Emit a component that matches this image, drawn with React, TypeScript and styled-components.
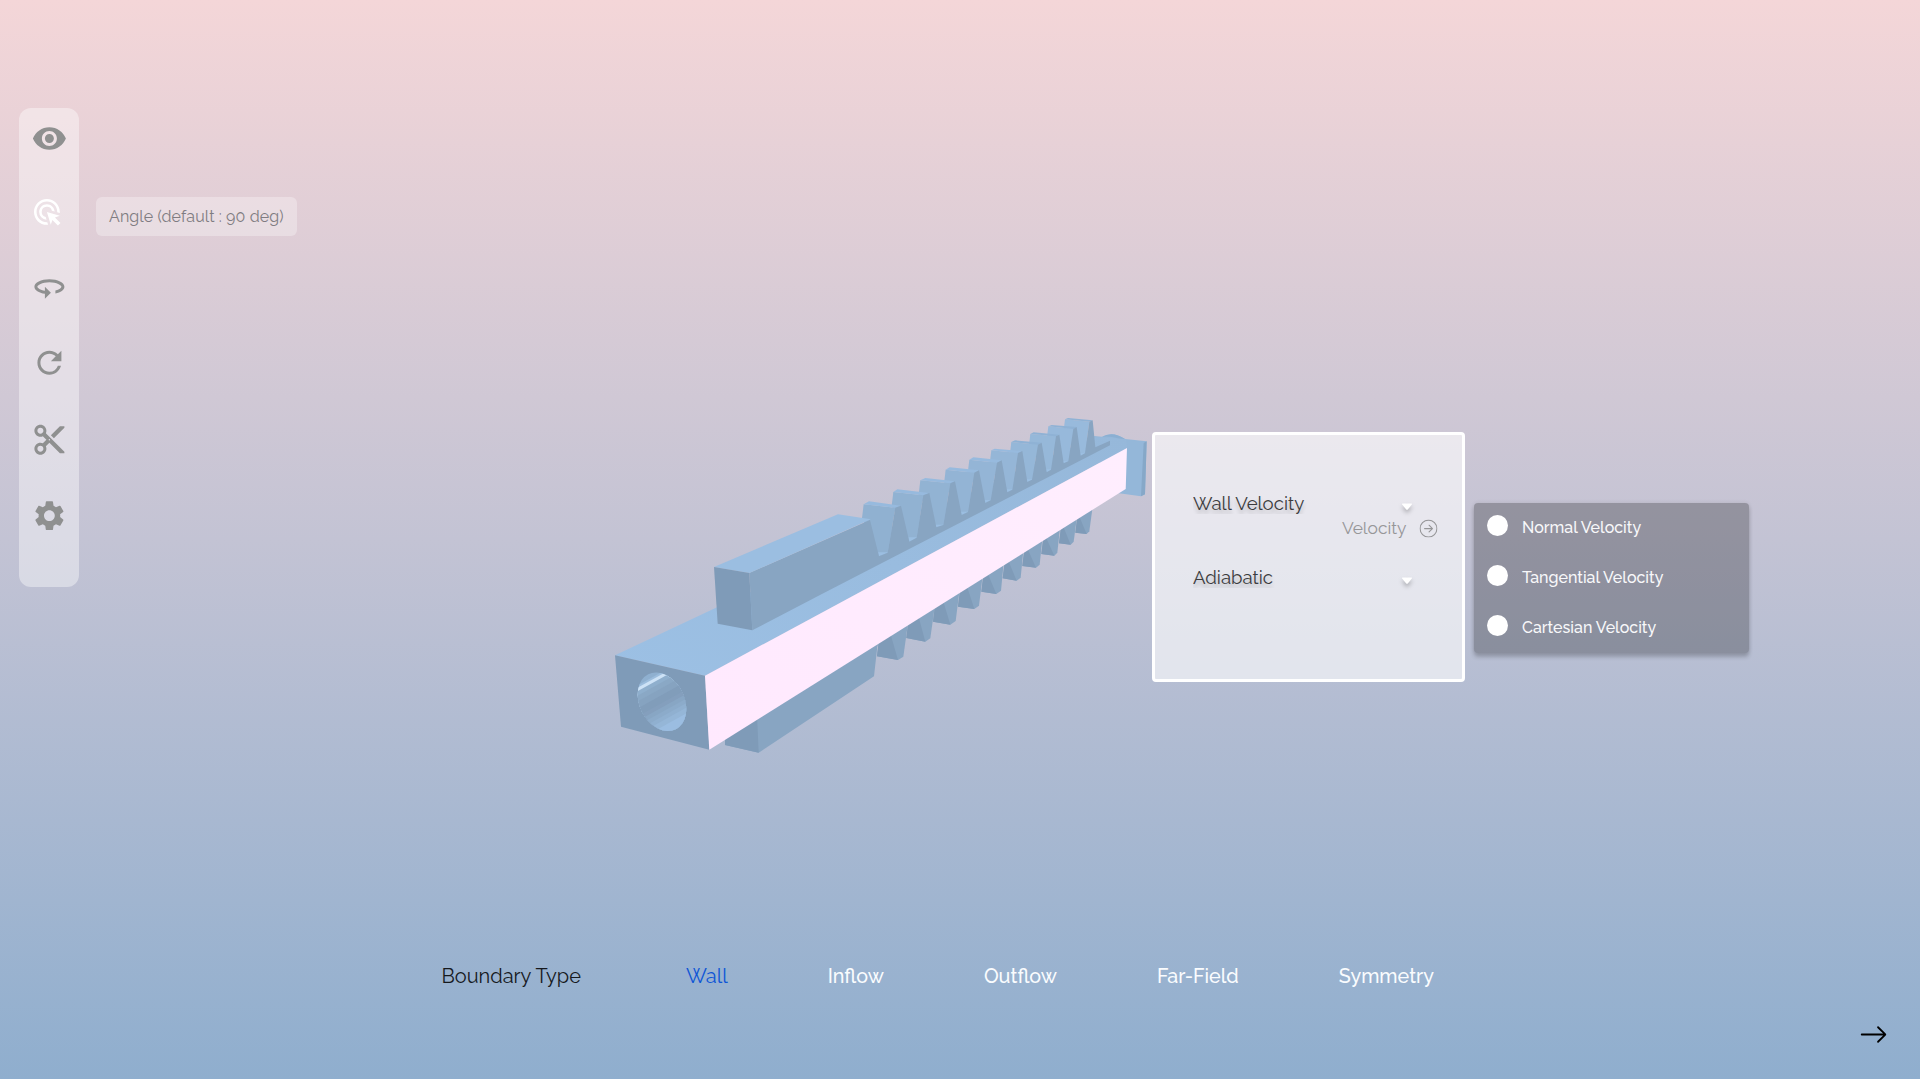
import React from "react";
import styled, { createGlobalStyle } from "styled-components";
import { MdRemoveRedEye, MdAdsClick, Md360, MdRefresh, MdContentCut, MdSettings } from "react-icons/md";
import { BsArrowRight, BsArrowRightCircle } from "react-icons/bs";

const GlobalStyle = createGlobalStyle`
  * { box-sizing: border-box; }
  body {
    margin: 0;
    font-family: Raleway, Lato, "Open Sans", sans-serif;
    -webkit-font-smoothing: antialiased;
  }
`;

const Page = styled.div`
  display: flex;
  flex-direction: column;
  width: 1920px;
  height: 1079px;
  overflow: hidden;
  background: linear-gradient(180deg, #f4d6d8 0%, #c3c3d4 50%, #8faece 100%);
`;

const Workspace = styled.main`
  display: flex;
  align-items: flex-start;
  height: 950px;
  padding-left: 19px;
`;

const Toolbar = styled.nav`
  display: flex;
  flex-direction: column;
  width: 60px;
  height: 479px;
  margin-top: 108px;
  padding: 12px 0 0 12px;
  border-radius: 12px;
  background: rgba(255, 255, 255, 0.4);
`;

const Tool = styled.button<{ $active?: boolean; $height: number; $drop?: number }>`
  display: flex;
  align-items: flex-start;
  width: 36px;
  height: ${(p) => p.$height}px;
  padding: 0;
  border: 0;
  background: none;
  color: ${(p) => (p.$active ? "#ffffff" : "#8f9090")};

  svg {
    transform: translate(0.4px, ${(p) => p.$drop ?? -0.3}px);
  }
`;

const Hint = styled.div`
  width: 201px;
  height: 39px;
  margin: 197px 0 0 17px;
  padding-left: 13px;
  border-radius: 6px;
  background: rgba(255, 255, 255, 0.3);
  color: #7f7c81;
  font-size: 16px;
  line-height: 39px;
  letter-spacing: 0.1px;
  white-space: nowrap;
`;

const Model = styled.svg`
  flex: none;
  width: 552px;
  height: 360px;
  margin: 400px 0 0 303px;
`;

const Panel = styled.section`
  flex: none;
  width: 313px;
  height: 250px;
  margin-top: 432px;
  padding: 54px 0 0 38px;
  border: 3px solid #fff;
  border-radius: 4px;
  background: rgba(255, 255, 255, 0.6);
`;

const SelectRow = styled.div`
  display: flex;
  align-items: center;
  height: 28px;
`;

const SelectLabel = styled.span`
  width: 208px;
  height: 22px;
  overflow: hidden;
  color: #3c3c3e;
  font-size: 18.6px;
  font-weight: 400;
  line-height: 24px;
  text-shadow: 0 4px 4px rgba(0, 0, 0, 0.2);
`;

const Caret = styled.svg`
  width: 12px;
  height: 8px;
  margin-top: 8px;
  overflow: visible;
  filter: drop-shadow(0 3px 2px rgba(0, 0, 0, 0.25));
`;

const LinkRow = styled.div`
  display: flex;
  align-items: center;
  height: 46px;
  padding: 0 0 24px 149px;
  color: #969698;
  font-size: 17.4px;

  svg {
    transform: translate(0.5px, 0.6px);
  }
`;

const LinkText = styled.span`
  width: 77px;
  font-weight: 400;
  line-height: 18px;
`;

const Options = styled.ul`
  flex: none;
  width: 275px;
  height: 150px;
  margin: 503px 0 0 9px;
  padding: 0;
  list-style: none;
  border-radius: 4px;
  background: rgba(0, 0, 0, 0.25);
  box-shadow: 0 4px 4px rgba(0, 0, 0, 0.2), 0 0 4px rgba(0, 0, 0, 0.1);
`;

const Option = styled.li`
  display: flex;
  align-items: center;
  gap: 14px;
  height: 50px;
  padding: 0 0 5px 13px;
  color: #f8f8fa;
  font-size: 16px;
  font-weight: 500;
`;

const Radio = styled.i`
  width: 21px;
  height: 21px;
  border-radius: 50%;
  background: #fff;
`;

const OptionText = styled.span`
  padding-top: 3px;
`;

const BoundaryBar = styled.footer`
  display: flex;
  gap: 100px;
  height: 52px;
  padding-left: 441.5px;
  line-height: 52px;
  font-size: 20px;
`;

const BoundaryTitle = styled.span`
  width: 144.5px;
  color: #16191d;
  white-space: nowrap;
`;

const BoundaryItem = styled.span<{ $active?: boolean }>`
  color: ${(p) => (p.$active ? "#0f56d6" : "#fafcfe")};
  font-size: ${(p) => (p.$active ? 20 : 19.72)}px;
  font-weight: ${(p) => (p.$active ? 400 : 500)};
  white-space: nowrap;
`;

const NextRow = styled.div`
  display: flex;
  justify-content: flex-end;
  padding: 18px 32px 0 0;
  color: #000;
`;

type P = [number, number];
const pts = (list: P[]) => list.map((p) => p.join(",")).join(" ");

const TOP = "#9bbee1";
const SIDE = "#88a5c2";
const FRONT = "#7f9bb8";

/* left corner, back corner, right corner, front-left corner, valley left, valley right */
const upperTeeth: P[][] = [
  [[131, 313], [147, 304], [243, 317], [226, 323], [177, 469], [203, 458]],
  [[220, 276], [232, 268], [328, 279], [310, 286], [268, 425], [290, 413]],
  [[301, 241], [316, 234], [405, 244], [391, 250], [349, 382], [370, 375]],
  [[377, 209], [389, 202], [477, 211], [463, 218], [425, 345], [444, 336]],
  [[448, 179], [460, 172], [545, 181], [531, 188], [496, 309], [512, 301]],
  [[514, 151], [524, 146], [607, 153], [594, 159], [562, 277], [577, 269]],
  [[574, 126], [585, 121], [665, 128], [654, 134], [622, 246], [636, 239]],
  [[631, 102], [641, 97], [718, 104], [708, 109], [680, 217], [693, 209]],
  [[685, 79], [695, 75], [770, 81], [760, 87], [731, 190], [745, 184]],
  [[735, 58], [744, 54], [818, 61], [808, 65], [782, 167], [795, 160]],
];

/* flanks catch more light towards the far end of the rack */
const flank = (i: number) => `rgb(${144 + i * 0.9}, ${177 + i * 1}, ${209 + i * 1.2})`;

/* left foot, ridge foot, right foot, right root, ridge root */
const lowerTeeth: P[][] = [
  [[171, 769], [234, 780], [250, 770], [264, 670], [208, 690]],
  [[259, 714], [316, 725], [331, 715], [345, 615], [293, 640]],
  [[339, 665], [391, 674], [407, 663], [418, 575], [367, 595]],
  [[414, 620], [463, 627], [477, 617], [488, 527], [438, 550]],
  [[484, 575], [529, 582], [543, 572], [551, 488], [501, 515]],
  [[548, 535], [590, 542], [602, 533], [610, 452], [562, 475]],
  [[607, 498], [648, 503], [659, 494], [667, 417], [620, 440]],
  [[664, 462], [703, 467], [712, 458], [720, 385], [676, 408]],
  [[717, 430], [752, 434], [761, 425], [770, 357], [728, 375]],
  [[766, 398], [800, 402], [808, 394], [818, 320], [776, 345]],
];

const rackSide: P[] = [
  [150, 360],
  ...upperTeeth.flatMap((t): P[] => [t[4], t[5], t[3], t[2]]),
  [826, 142], [870, 122], [870, 136], [0, 585], [-203, 691], [-212, 519],
];

const boreBands: [number, string][] = [
  [-4, "#8fb0d0"], [2, "#9cbddd"], [4, "#cde2f6"], [7, "#8fafcd"], [11, "#8aa8c5"], [16, "#86a3c0"],
  [22, "#819dba"], [29, "#849fbd"], [33, "#88a6c4"], [37, "#8cabca"], [41, "#90b0d0"], [45, "#95b6d7"], [50, "#9bbde1"],
];

function GearRack() {
  return (
    <Model viewBox="600 400 552 360">
      <defs>
        <clipPath id="bore">
          <ellipse rx="30.8" ry="22.4" transform="translate(662 701.7) rotate(63.5)" />
        </clipPath>
        <linearGradient id="pink" x1="0" y1="1" x2="1" y2="0">
          <stop offset="0" stopColor="#ffe9fe" />
          <stop offset="1" stopColor="#ffeefe" />
        </linearGradient>
        <linearGradient id="deck" x1="0" y1="1" x2="1" y2="0">
          <stop offset="0" stopColor="#9cc0e4" />
          <stop offset="1" stopColor="#96b8da" />
        </linearGradient>
      </defs>

      <g transform="translate(820 400) scale(0.33333)">
        <path d="M822 108 L846 110 Q878 92 915 117 L980 124 L975 283 L963 289 L897 280 L822 160 Z" fill="#94b7d9" />
        <polygon points={pts([[971, 129], [980, 124], [975, 283], [963, 289]])} fill="#86a8c8" />
        <path d="M846 110 Q878 92 915 117 L898 118 Q880 107 846 110 Z" fill="#8bafd2" />
      </g>

      <polygon points="615,655.3 716,607.7 1094,437 1126,439 1127,448 705,675.7" fill="url(#deck)" />

      <g transform="translate(820 400) scale(0.33333)">
        {upperTeeth.map((t, i) => ({ t, i })).reverse().map(({ t, i }) => (
          <g key={i}>
            <polygon points={pts([[t[0][0] - 5, t[0][1] + 42], t[0], t[3], t[5], t[4]])} fill={flank(i)} />
            <polygon points={pts([t[0], t[1], t[2], t[3]])} fill={i < 6 ? "#97bade" : "#8fb2d5"} />
            <polygon points={pts([[t[4][0] - 3, t[5][1] - 1], [t[5][0], t[5][1] - 1], t[5], t[4]])} fill={TOP} />
          </g>
        ))}
        <polygon points={pts(rackSide)} fill={SIDE} />
        {lowerTeeth.map(([a, b, c, d, e], i) => (
          <g key={i}>
            <polygon points={pts([a, b, c, d, [a[0] + 10, a[1] - 80]])} fill={SIDE} />
            <polygon points={pts([a, b, e, [a[0] + 8, a[1] - 65]])} fill={FRONT} />
          </g>
        ))}
      </g>

      <polygon points="714,567 838,514.3 870.7,519.3 749.3,573" fill={TOP} />
      <polygon points="714,567 749.3,573 752.3,630.3 717.7,623.7" fill={FRONT} />

      <polygon points="725,745 725,738 757,715 880,640 877.3,646.7 874,676.3 758.7,752.7" fill={SIDE} />
      <polygon points="725,745 725,738 757,715 758.7,752.7" fill={FRONT} />

      <polygon points="615,655.3 705,675.7 709.3,749.7 621,726.7" fill={FRONT} />
      <g clipPath="url(#bore)">
        {boreBands.map(([offset, color]) => (
          <rect key={offset} x="-60" y={offset - 28} width="120" height="70" fill={color}
            transform="translate(662 701.7) rotate(-29)" />
        ))}
      </g>

      <polygon points="705,675.7 1127,448 1125.7,489 709.3,749.7" fill="url(#pink)" />
    </Model>
  );
}

function SelectCaret() {
  return (
    <Caret viewBox="0 0 12 8">
      <path d="M1.6 0.5H10.4Q11.4 0.8 10.8 1.6L6.8 6.4Q6 7.2 5.2 6.4L1.2 1.6Q0.6 0.8 1.6 0.5Z" fill="#fff" />
    </Caret>
  );
}

export default function App() {
  return (
    <Page>
      <GlobalStyle />
      <Workspace>
        <Toolbar>
          <Tool $height={76} $drop={0.4}><MdRemoveRedEye size={36} /></Tool>
          <Tool $height={73} $drop={0.4} $active><MdAdsClick size={31} /></Tool>
          <Tool $height={76}><Md360 size={36} /></Tool>
          <Tool $height={77}><MdRefresh size={36} /></Tool>
          <Tool $height={76}><MdContentCut size={36} /></Tool>
          <Tool $height={36}><MdSettings size={36} /></Tool>
        </Toolbar>
        <Hint>Angle (default : 90 deg)</Hint>
        <GearRack />
        <Panel>
          <SelectRow>
            <SelectLabel>Wall Velocity</SelectLabel>
            <SelectCaret />
          </SelectRow>
          <LinkRow>
            <LinkText>Velocity</LinkText>
            <BsArrowRightCircle size={18} />
          </LinkRow>
          <SelectRow>
            <SelectLabel>Adiabatic</SelectLabel>
            <SelectCaret />
          </SelectRow>
        </Panel>
        <Options>
          <Option><Radio /><OptionText>Normal Velocity</OptionText></Option>
          <Option><Radio /><OptionText>Tangential Velocity</OptionText></Option>
          <Option><Radio /><OptionText>Cartesian Velocity</OptionText></Option>
        </Options>
      </Workspace>
      <BoundaryBar>
        <BoundaryTitle>Boundary Type</BoundaryTitle>
        <BoundaryItem $active>Wall</BoundaryItem>
        <BoundaryItem>Inflow</BoundaryItem>
        <BoundaryItem>Outflow</BoundaryItem>
        <BoundaryItem>Far-Field</BoundaryItem>
        <BoundaryItem>Symmetry</BoundaryItem>
      </BoundaryBar>
      <NextRow><BsArrowRight size={29} /></NextRow>
    </Page>
  );
}
